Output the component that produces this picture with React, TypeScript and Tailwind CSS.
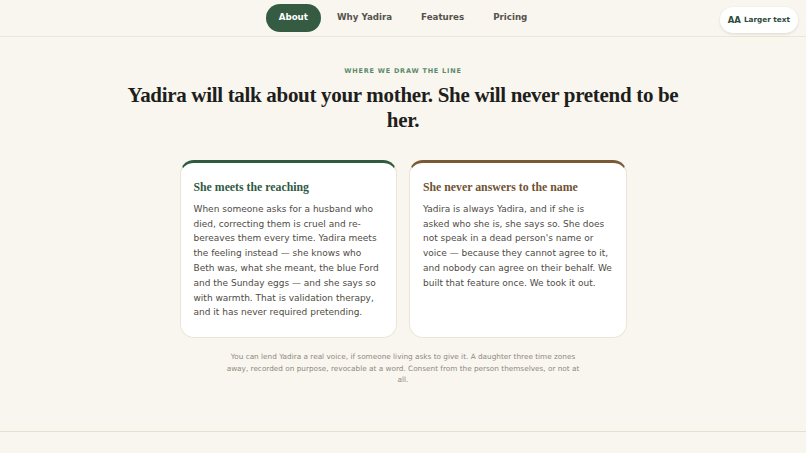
import React from 'react';

const Card = ({ title, accent, titleColor, children }: { title: string; accent: string; titleColor: string; children: React.ReactNode }) => {
  return (
    <div className={`bg-white rounded-[14px] border border-[#ebe5d6] border-t-[3px] ${accent} px-[13px] pt-[15px] pb-[17px]`}>
      <h3 className={`font-['Liberation_Serif',serif] font-bold text-[11.8px] leading-[18px] ${titleColor} mb-[6px]`}>{title}</h3>
      <p className="text-[9px] leading-[14.8px] text-[#4f4b45]">{children}</p>
    </div>
  );
};

const App = () => {
  return (
    <div className="min-h-[453px] bg-[#f9f6ef] font-['DejaVu_Sans',sans-serif] text-[#2a2a2a]">
      <header className="relative h-[37px] border-b border-[#ece6d7] flex items-center justify-center">
        <nav className="flex items-center gap-[3px] text-[8.7px] font-bold text-[#55524c]">
          <a className="bg-[#355c42] text-white rounded-full px-[13px] py-[7px]">About</a>
          <a className="px-[13px] py-[7px]">Why Yadira</a>
          <a className="px-[13px] py-[7px]">Features</a>
          <a className="px-[13px] py-[7px]">Pricing</a>
        </nav>
        <button className="absolute right-[8px] top-[7px] h-[26px] px-[8px] bg-white rounded-full shadow-[0_1px_3px_rgba(0,0,0,0.12)] flex items-center gap-[3px] font-bold text-[#2e4a3a]">
          <span className="text-[8.5px]">AA</span>
          <span className="text-[7.3px]">Larger text</span>
        </button>
      </header>

      <main className="flex flex-col items-center pt-[30px]">
        <p className="text-[6.5px] font-bold tracking-[0.12em] text-[#5b8a6b] uppercase">Where we draw the line</p>
        <h1 className="mt-[6px] w-[580px] text-center font-['Liberation_Serif',serif] font-bold text-[21px] leading-[25px] tracking-[-0.015em] text-[#1e1e1c]">
          Yadira will talk about your mother. She will never pretend to be her.
        </h1>

        <div className="mt-[27px] grid grid-cols-2 gap-[12px] w-[447px]">
          <Card title="She meets the reaching" accent="border-t-[#2f5a3f]" titleColor="text-[#2f5a3f]">
            When someone asks for a husband who died, correcting them is cruel and re-bereaves them every time. Yadira meets the feeling instead — she knows who Beth was, what she meant, the blue Ford and the Sunday eggs — and she says so with warmth. That is validation therapy, and it has never required pretending.
          </Card>
          <Card title="She never answers to the name" accent="border-t-[#7a5a35]" titleColor="text-[#6f5232]">
            Yadira is always Yadira, and if she is asked who she is, she says so. She does not speak in a dead person's name or voice — because they cannot agree to it, and nobody can agree on their behalf. We built that feature once. We took it out.
          </Card>
        </div>

        <p className="mt-[13px] w-[360px] text-center text-[7.3px] leading-[11.5px] text-[#8f8a80]">
          You can lend Yadira a real voice, if someone living asks to give it. A daughter three time zones away, recorded on purpose, revocable at a word. Consent from the person themselves, or not at all.
        </p>
      </main>

      <div className="mt-[45px] border-t border-[#e6e0cf]" />
    </div>
  );
};

export default App;
